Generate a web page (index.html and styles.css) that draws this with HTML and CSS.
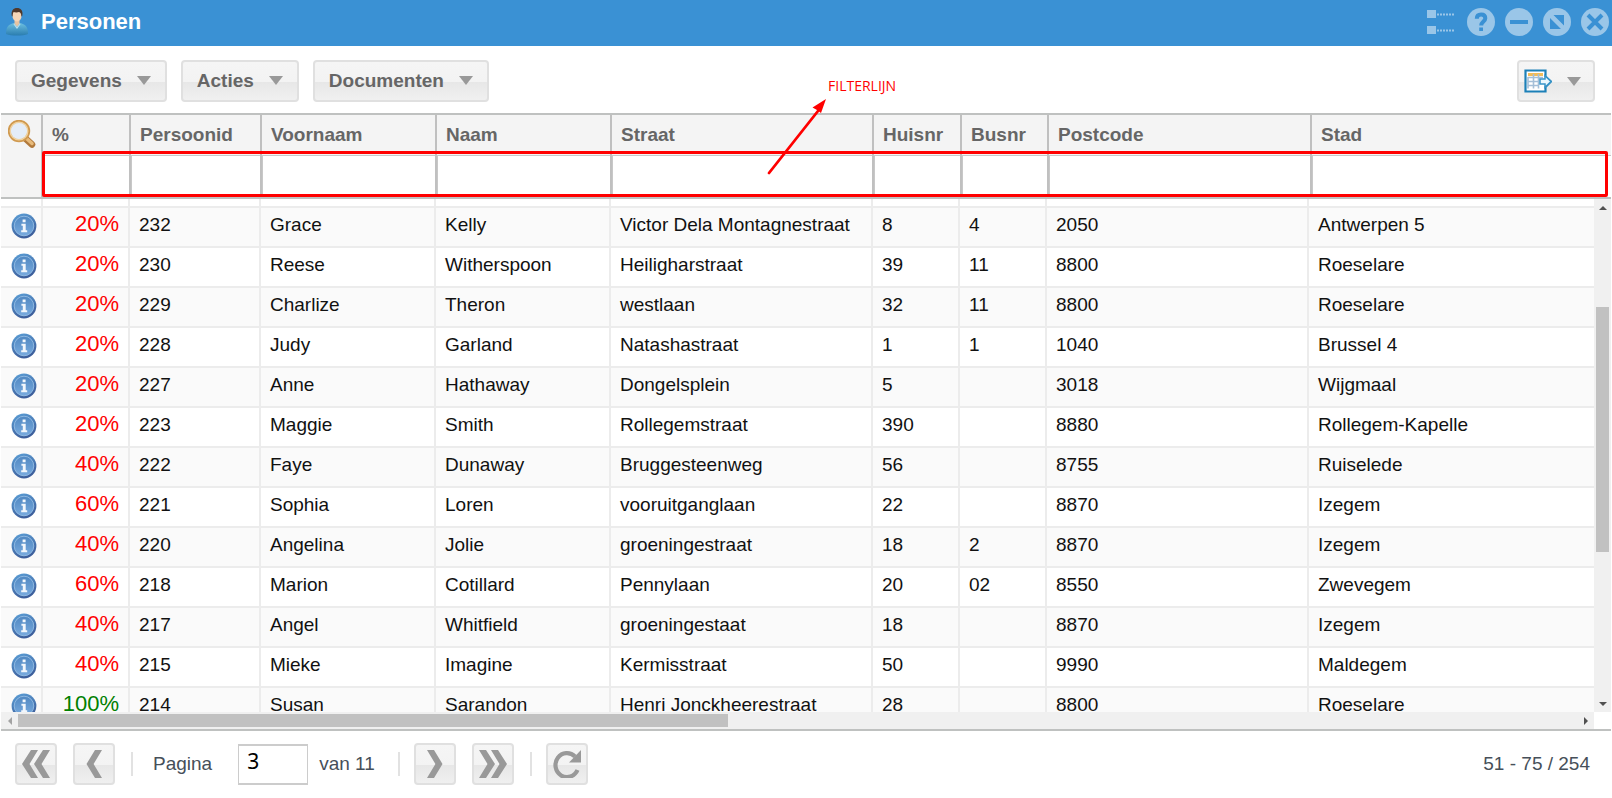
FILE: index.html
```html
<!DOCTYPE html>
<html lang="nl">

<head>
    <meta charset="utf-8">
    <title>Personen</title>
    <link rel="stylesheet" href="styles.css">
</head>

<body>
    <!-- shared icons -->
    <svg class="sprite" width="0" height="0" aria-hidden="true">
        <defs>
            <linearGradient id="infoFill" x1="0" y1="0" x2="0" y2="1">
                <stop offset="0" stop-color="#5088c2" />
                <stop offset="1" stop-color="#78aade" />
            </linearGradient>
            <linearGradient id="infoRim" x1="0" y1="0" x2="0.4" y2="1">
                <stop offset="0" stop-color="#5ba0d8" />
                <stop offset="1" stop-color="#3d5f9c" />
            </linearGradient>
            <linearGradient id="shirt" x1="0" y1="0" x2="0" y2="1">
                <stop offset="0" stop-color="#6cbfe0" />
                <stop offset="1" stop-color="#2a7db0" />
            </linearGradient>
            <symbol id="info" viewBox="0 0 26 26">
                <circle cx="13" cy="13" r="12.4" fill="url(#infoRim)" />
                <circle cx="13" cy="13" r="9.800" fill="url(#infoFill)" stroke="#8fb9e2" stroke-width="1" />
                <path d="M11.600 6.500h3v2.800h-3zM10.400 10.800h4.300v6.400h1.500v2.100h-6v-2.100h1.600v-4.400h-1.400z" fill="#f2f7fc" />
            </symbol>
            <symbol id="prev" viewBox="0 0 16 28">
                <path d="M9 0h7L7.600 14 16 28H9L0.500 14z" />
            </symbol>
        </defs>
    </svg>

    <header class="titlebar">
        <svg class="user-icon" viewBox="0 0 24 28" aria-hidden="true">
            <path d="M1 26c0-8 3-9.500 8-11h6c5 1.500 8 3 8 11-5 2-17 2-22 0z" fill="url(#shirt)" />
            <path d="M9.500 11h5v4.500L12 19l-2.500-3.500z" fill="#e6c3a2" />
            <path d="M9.200 15.500l2.800 3.500 2.800-3.500.7.700-3.500 4.800-3.500-4.800z" fill="#b9dfef" />
            <ellipse cx="12" cy="7.500" rx="4.600" ry="6" fill="#f5d6b8" />
            <path d="M6.800 8C5.800 2.500 8.500 0 12 0s6.500 2.500 5.200 8l-.8.500c0-2.500-.9-4-2.400-4.500-2 .7-4.400.3-5.400 0-.7 1-1 2.500-1 4.500z" fill="#50392c" />
        </svg>
        <h1>Personen</h1>
        <div class="window-tools">
            <button class="tool tree" aria-label="Structuur">
                <svg viewBox="0 0 28 28" aria-hidden="true">
                    <path d="M0 2h9v8H0zM0 18h9v8H0z" />
                    <path d="M10 6.500h18M10 22.500h18" fill="none" stroke="#9ac6e8" stroke-width="2" stroke-dasharray="2 1" />
                </svg>
            </button>
            <button class="tool" aria-label="Help">
                <svg viewBox="0 0 28 28" aria-hidden="true">
                    <circle cx="14" cy="14" r="14" />
                    <path d="M9.800 10.800c0-2.800 1.700-4.300 4.300-4.300s4.200 1.400 4.200 3.700c0 3.200-4.100 3.300-4.100 7.300" class="cut" />
                    <path d="M12.200 19.500h3.800v3.500h-3.800z" fill="#3a91d4" />
                </svg>
            </button>
            <button class="tool" aria-label="Minimaliseren">
                <svg viewBox="0 0 28 28" aria-hidden="true">
                    <circle cx="14" cy="14" r="14" />
                    <path d="M5 14h18" class="cut" />
                </svg>
            </button>
            <button class="tool" aria-label="Maximaliseren">
                <svg viewBox="0 0 28 28" aria-hidden="true">
                    <circle cx="14" cy="14" r="14" />
                    <path d="M10.500 7H21v10.500zM7 10v11h11z" fill="#3a91d4" />
                </svg>
            </button>
            <button class="tool" aria-label="Sluiten">
                <svg viewBox="0 0 28 28" aria-hidden="true">
                    <circle cx="14" cy="14" r="14" />
                    <path d="M7 7l14 14M21 7L7 21" class="cut" />
                </svg>
            </button>
        </div>
    </header>

    <nav class="toolbar">
        <button class="btn menu">Gegevens<span class="caret"></span></button>
        <button class="btn menu">Acties<span class="caret"></span></button>
        <button class="btn menu">Documenten<span class="caret"></span></button>
        <button class="btn export" aria-label="Exporteren">
            <svg viewBox="0 0 28 24" aria-hidden="true">
                <path d="M1.500 1.500h20v6l5.500 5-5.500 5.500v4.500h-20z" fill="#fff" stroke="#1c80b8" stroke-width="2.200" />
                <path d="M4 4h15v3H4z" fill="#f2bc58" />
                <path d="M4 8v11.500M4 8.500h15M4 12.500h11M4 16.500h11M9.500 5v14.500M14.500 5v14.500" fill="none" stroke="#a4bfd8" stroke-width="1.600" />
                <path d="M16 10h5V6.800l6 5.700-6 5.700V15h-5z" fill="#eaf7fe" stroke="#3794c8" stroke-width="1.500" />
            </svg>
            <span class="caret"></span>
        </button>
    </nav>

    <main class="grid">
        <div class="grid-head">
            <table class="cols head">
                <colgroup>
                    <col class="c-icon"><col class="c-pct"><col class="c-id"><col class="c-name"><col class="c-name">
                    <col class="c-street"><col class="c-nr"><col class="c-box"><col class="c-zip"><col>
                </colgroup>
                <tr class="labels">
                    <th rowspan="2" class="search">
                        <button class="icon-btn" aria-label="Zoeken">
                            <svg viewBox="0 0 28 28" aria-hidden="true">
                                <path d="M18 19l6 5.500" stroke="#b27a3c" stroke-width="6.500" stroke-linecap="round" />
                                <path d="M18.500 18.500l5.500 5" stroke="#e8bb7c" stroke-width="3.500" stroke-linecap="round" />
                                <circle cx="11" cy="11" r="9.800" fill="#e4edf8" stroke="#d09a50" stroke-width="2.800" />
                                <circle cx="11" cy="11" r="8.800" fill="none" stroke="#f0d3a2" stroke-width="1.400" />
                            </svg>
                        </button>
                    </th>
                    <th>%</th>
                    <th>Persoonid</th>
                    <th>Voornaam</th>
                    <th>Naam</th>
                    <th>Straat</th>
                    <th>Huisnr</th>
                    <th>Busnr</th>
                    <th>Postcode</th>
                    <th>Stad</th>
                </tr>
                <tr class="filters">
                    <td><input type="text" aria-label="Filter %"></td>
                    <td><input type="text" aria-label="Filter Persoonid"></td>
                    <td><input type="text" aria-label="Filter Voornaam"></td>
                    <td><input type="text" aria-label="Filter Naam"></td>
                    <td><input type="text" aria-label="Filter Straat"></td>
                    <td><input type="text" aria-label="Filter Huisnr"></td>
                    <td><input type="text" aria-label="Filter Busnr"></td>
                    <td><input type="text" aria-label="Filter Postcode"></td>
                    <td><input type="text" aria-label="Filter Stad"></td>
                </tr>
            </table>

            <!-- callout for the filter row -->
            <div class="mark-box"></div>
            <svg class="mark-arrow" viewBox="0 0 62 78" aria-hidden="true">
                <path d="M4 75L53 13" stroke="#f00" stroke-width="2.800" stroke-linecap="round" />
                <path d="M61 1l-5 14-4-3-4.500-2.500z" fill="#f00" />
            </svg>
            <span class="mark-label">FILTERLIJN</span>
        </div>

        <div class="grid-body">
            <div class="rows">
                <table class="cols data">
                    <colgroup>
                        <col class="c-icon"><col class="c-pct-d"><col class="c-id"><col class="c-name"><col class="c-name">
                        <col class="c-street"><col class="c-box"><col class="c-box"><col class="c-zip-d"><col>
                    </colgroup>
                    <tr class="cut-off"><td></td><td></td><td></td><td></td><td></td><td></td><td></td><td></td><td></td><td></td></tr>
                    <tr>
                        <td class="act"><button class="icon-btn" aria-label="Info 232"><svg><use href="#info" /></svg></button></td>
                        <td class="pct low">20%</td><td>232</td><td>Grace</td><td>Kelly</td><td>Victor Dela Montagnestraat</td><td>8</td><td>4</td><td>2050</td><td>Antwerpen 5</td>
                    </tr>
                    <tr>
                        <td class="act"><button class="icon-btn" aria-label="Info 230"><svg><use href="#info" /></svg></button></td>
                        <td class="pct low">20%</td><td>230</td><td>Reese</td><td>Witherspoon</td><td>Heiligharstraat</td><td>39</td><td>11</td><td>8800</td><td>Roeselare</td>
                    </tr>
                    <tr>
                        <td class="act"><button class="icon-btn" aria-label="Info 229"><svg><use href="#info" /></svg></button></td>
                        <td class="pct low">20%</td><td>229</td><td>Charlize</td><td>Theron</td><td>westlaan</td><td>32</td><td>11</td><td>8800</td><td>Roeselare</td>
                    </tr>
                    <tr>
                        <td class="act"><button class="icon-btn" aria-label="Info 228"><svg><use href="#info" /></svg></button></td>
                        <td class="pct low">20%</td><td>228</td><td>Judy</td><td>Garland</td><td>Natashastraat</td><td>1</td><td>1</td><td>1040</td><td>Brussel 4</td>
                    </tr>
                    <tr>
                        <td class="act"><button class="icon-btn" aria-label="Info 227"><svg><use href="#info" /></svg></button></td>
                        <td class="pct low">20%</td><td>227</td><td>Anne</td><td>Hathaway</td><td>Dongelsplein</td><td>5</td><td></td><td>3018</td><td>Wijgmaal</td>
                    </tr>
                    <tr>
                        <td class="act"><button class="icon-btn" aria-label="Info 223"><svg><use href="#info" /></svg></button></td>
                        <td class="pct low">20%</td><td>223</td><td>Maggie</td><td>Smith</td><td>Rollegemstraat</td><td>390</td><td></td><td>8880</td><td>Rollegem-Kapelle</td>
                    </tr>
                    <tr>
                        <td class="act"><button class="icon-btn" aria-label="Info 222"><svg><use href="#info" /></svg></button></td>
                        <td class="pct low">40%</td><td>222</td><td>Faye</td><td>Dunaway</td><td>Bruggesteenweg</td><td>56</td><td></td><td>8755</td><td>Ruiselede</td>
                    </tr>
                    <tr>
                        <td class="act"><button class="icon-btn" aria-label="Info 221"><svg><use href="#info" /></svg></button></td>
                        <td class="pct low">60%</td><td>221</td><td>Sophia</td><td>Loren</td><td>vooruitganglaan</td><td>22</td><td></td><td>8870</td><td>Izegem</td>
                    </tr>
                    <tr>
                        <td class="act"><button class="icon-btn" aria-label="Info 220"><svg><use href="#info" /></svg></button></td>
                        <td class="pct low">40%</td><td>220</td><td>Angelina</td><td>Jolie</td><td>groeningestraat</td><td>18</td><td>2</td><td>8870</td><td>Izegem</td>
                    </tr>
                    <tr>
                        <td class="act"><button class="icon-btn" aria-label="Info 218"><svg><use href="#info" /></svg></button></td>
                        <td class="pct low">60%</td><td>218</td><td>Marion</td><td>Cotillard</td><td>Pennylaan</td><td>20</td><td>02</td><td>8550</td><td>Zwevegem</td>
                    </tr>
                    <tr>
                        <td class="act"><button class="icon-btn" aria-label="Info 217"><svg><use href="#info" /></svg></button></td>
                        <td class="pct low">40%</td><td>217</td><td>Angel</td><td>Whitfield</td><td>groeningestaat</td><td>18</td><td></td><td>8870</td><td>Izegem</td>
                    </tr>
                    <tr>
                        <td class="act"><button class="icon-btn" aria-label="Info 215"><svg><use href="#info" /></svg></button></td>
                        <td class="pct low">40%</td><td>215</td><td>Mieke</td><td>Imagine</td><td>Kermisstraat</td><td>50</td><td></td><td>9990</td><td>Maldegem</td>
                    </tr>
                    <tr>
                        <td class="act"><button class="icon-btn" aria-label="Info 214"><svg><use href="#info" /></svg></button></td>
                        <td class="pct full">100%</td><td>214</td><td>Susan</td><td>Sarandon</td><td>Henri Jonckheerestraat</td><td>28</td><td></td><td>8800</td><td>Roeselare</td>
                    </tr>
                </table>
            </div>
            <div class="vscroll" aria-hidden="true">
                <i class="arrow up"></i>
                <i class="thumb"></i>
                <i class="arrow down"></i>
            </div>
            <div class="hscroll" aria-hidden="true">
                <i class="arrow left"></i>
                <i class="thumb"></i>
                <i class="arrow right"></i>
            </div>
        </div>
    </main>

    <footer class="pager">
        <button class="btn page" aria-label="Eerste pagina">
            <svg class="double" viewBox="0 0 28 28" aria-hidden="true"><path d="M9 0h7L7.500 14 16 28H9L0 14zM21 0h7l-8.500 14L28 28h-7l-9-14z" /></svg>
        </button>
        <button class="btn page" aria-label="Vorige pagina">
            <svg class="single" aria-hidden="true"><use href="#prev" /></svg>
        </button>
        <span class="sep"></span>
        <label for="page">Pagina</label>
        <input type="text" id="page" value="3">
        <span class="total">van 11</span>
        <span class="sep"></span>
        <button class="btn page" aria-label="Volgende pagina">
            <svg class="single flip" aria-hidden="true"><use href="#prev" /></svg>
        </button>
        <button class="btn page" aria-label="Laatste pagina">
            <svg class="double flip" viewBox="0 0 28 28" aria-hidden="true"><path d="M9 0h7L7.500 14 16 28H9L0 14zM21 0h7l-8.500 14L28 28h-7l-9-14z" /></svg>
        </button>
        <span class="sep"></span>
        <button class="btn page" aria-label="Vernieuwen">
            <svg class="double" viewBox="0 0 28 28" aria-hidden="true">
                <path d="M22 6.500A11.500 12 0 1 0 24.500 20" fill="none" stroke="#999" stroke-width="4.200" />
                <path d="M28 0v12.500H16z" />
            </svg>
        </button>
        <span class="range">51 - 75 / 254</span>
    </footer>
</body>

</html>
```

FILE: styles.css
```css
* {
    box-sizing: border-box;
}

body {
    margin: 0;
    height: 100vh;
    display: flex;
    flex-direction: column;
    overflow: hidden;
    background: #fff;
    color: #111;
    font-family: "Liberation Sans", Arial, sans-serif;
    font-size: 19px;
}

button,
input {
    font: inherit;
    margin: 0;
}

svg {
    display: block;
}

.sprite {
    position: absolute;
}

/* title bar */

.titlebar {
    display: flex;
    align-items: center;
    height: 46px;
    padding: 0 3px 2px 5px;
    background: #3a91d4;
    flex-shrink: 0;
}

.user-icon {
    width: 24px;
    height: 28px;
}

.titlebar h1 {
    margin: 0 0 0 12px;
    color: #fff;
    font-size: 22px;
    line-height: 26px;
}

.window-tools {
    display: flex;
    gap: 10px;
    margin-left: auto;
}

.tool {
    width: 28px;
    height: 28px;
    padding: 0;
    border: 0;
    background: none;
    cursor: pointer;
}

.tree {
    margin-right: 2px;
}

.tool svg {
    width: 28px;
    height: 28px;
    fill: #9ac6e8;
}

.tool .cut {
    fill: none;
    stroke: #3a91d4;
    stroke-width: 4;
}

/* toolbar */

.toolbar {
    display: flex;
    gap: 14px;
    padding: 14px 17px 11px 15px;
    flex-shrink: 0;
}

.btn {
    display: flex;
    align-items: center;
    height: 42px;
    padding: 0;
    border: 2px solid #e0e0e0;
    border-radius: 4px;
    background: linear-gradient(#f5f5f5 0%, #f3f3f3 52%, #e7e7e7 53%, #f0f0f0 100%);
    color: #666;
    font-weight: bold;
    cursor: pointer;
}

.menu {
    padding: 0 14px 1px;
}

.caret {
    margin-left: 15px;
    border: 7px solid transparent;
    border-top: 9px solid #999;
    border-bottom: 0;
}

.export {
    width: 78px;
    margin-left: auto;
    padding-left: 5px;
}

.export svg {
    width: 28px;
    height: 24px;
}

/* grid */

.grid {
    display: flex;
    flex-direction: column;
    flex: 1;
    min-height: 0;
    margin: 0 1px;
    border-top: 2px solid #bfc1c0;
    border-bottom: 2px solid #bfc1c0;
}

.cols {
    width: 100%;
    table-layout: fixed;
    border-collapse: separate;
    border-spacing: 0;
}

.c-icon {
    width: 42px;
}

.c-pct,
.c-nr {
    width: 88px;
}

.c-pct-d,
.c-box {
    width: 87px;
}

.c-id {
    width: 131px;
}

.c-name {
    width: 175px;
}

.c-street,
.c-zip-d {
    width: 262px;
}

.c-zip {
    width: 263px;
}

.grid-head {
    position: relative;
    border-bottom: 2px solid #bfc1c0;
    flex-shrink: 0;
}

.head {
    background: #f4f4f4;
}

.head th {
    height: 40px;
    padding: 0 9px;
    border-right: 2px solid #c0c0c0;
    color: #666;
    line-height: 26px;
    text-align: left;
    vertical-align: middle;
}

.head th.search {
    padding: 5px 0 0 7px;
    vertical-align: top;
}

.search svg {
    width: 28px;
    height: 28px;
}

.filters td {
    height: 42px;
    padding: 0;
    border-right: 2px solid #c0c0c0;
}

.head th:last-child,
.filters td:last-child {
    border-right: 0;
}

.filters input {
    display: block;
    width: 100%;
    height: 42px;
    padding: 0 8px;
    border: 1px solid #c8c8c8;
    border-width: 1px 0 0 1px;
    border-radius: 0;
    background: #fff;
    outline: none;
}

.icon-btn {
    display: block;
    padding: 0;
    border: 0;
    background: none;
    cursor: pointer;
}

/* red callout over the filter row */

.mark-box {
    position: absolute;
    top: 36px;
    right: 3px;
    bottom: 0;
    left: 41px;
    border: 3px solid #f00;
    border-radius: 2px;
    pointer-events: none;
}

.mark-arrow {
    position: absolute;
    top: -17px;
    left: 764px;
    width: 62px;
    height: 78px;
    pointer-events: none;
}

.mark-label {
    position: absolute;
    top: -39px;
    left: 827px;
    color: #f00;
    font-family: "Open Sans", sans-serif;
    font-size: 14px;
    line-height: 20px;
}

.grid-body {
    display: grid;
    grid-template-columns: 1fr 17px;
    grid-template-rows: 1fr 17px;
    flex: 1;
    min-height: 0;
}

.rows {
    overflow: hidden;
    min-height: 0;
}

.data td {
    height: 40px;
    padding: 3px 9px 0;
    border-right: 2px solid #ececec;
    border-bottom: 2px solid #ececec;
    line-height: 26px;
    white-space: nowrap;
    vertical-align: baseline;
}

.data td:last-child {
    border-right: 0;
}

.data tr:nth-child(even) {
    background: #fafafa;
}

.data .cut-off td {
    height: 9px;
    padding: 0;
}

.data .act {
    padding: 0 0 2px 10px;
    vertical-align: middle;
}

.act svg {
    width: 26px;
    height: 26px;
}

.data .pct {
    font-size: 22px;
    text-align: right;
}

.low {
    color: #f00;
}

.full {
    color: #008000;
}

/* scrollbars */

.vscroll,
.hscroll {
    display: grid;
    align-items: center;
    justify-items: center;
    background: #f0f0f0;
}

.vscroll {
    grid-template-rows: 17px 91fr 245fr 143fr 17px;
}

.hscroll {
    grid-template-columns: 17px 710fr 849fr 17px;
}

.thumb {
    background: #c1c1c1;
}

.vscroll .thumb {
    grid-row: 3;
    width: 13px;
    height: 100%;
}

.vscroll .down {
    grid-row: 5;
}

.hscroll .thumb {
    grid-column: 2;
    width: 100%;
    height: 13px;
}

.hscroll .right {
    grid-column: 4;
}

.arrow {
    border: 4px solid transparent;
}

.up {
    border-top: 0;
    border-bottom-color: #505050;
}

.down {
    border-bottom: 0;
    border-top-color: #505050;
}

.left {
    border-left: 0;
    border-right-color: #a3a3a3;
}

.right {
    border-right: 0;
    border-left-color: #505050;
}

/* pager */

.pager {
    display: flex;
    align-items: center;
    height: 67px;
    padding: 0 22px 1px 15px;
    color: #464f59;
    flex-shrink: 0;
}

.page {
    justify-content: center;
    width: 42px;
}

.page + .page {
    margin-left: 16px;
}

.page svg {
    height: 28px;
    fill: #999;
}

.single {
    width: 16px;
}

.double {
    width: 28px;
}

.flip {
    transform: scaleX(-1);
}

.sep {
    width: 2px;
    height: 24px;
    margin: 0 14px 0 16px;
    background: #e2e2e2;
}

.pager label {
    margin: 0 26px 0 6px;
}

.pager input {
    width: 70px;
    height: 41px;
    padding: 0 8px 6px;
    border: 1px solid #ccc;
    border-width: 2px 1px;
    border-radius: 0;
    color: #000;
    font-family: "Noto Sans", sans-serif;
    font-size: 21px;
}

.total {
    margin: 0 7px 0 11px;
}

.range {
    margin-left: auto;
}
```
